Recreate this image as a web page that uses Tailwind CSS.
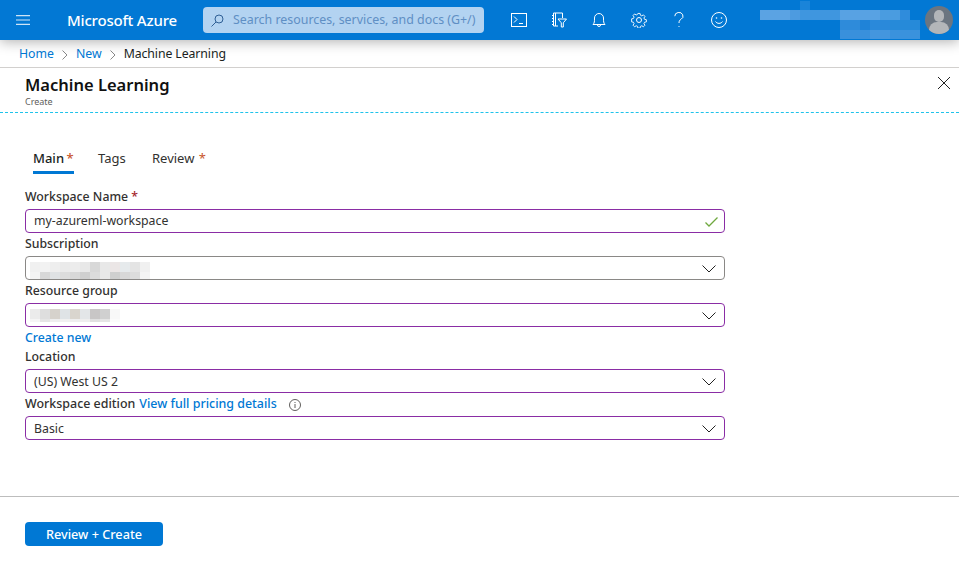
<!DOCTYPE html>
<html lang="en">
<head>
  <meta charset="UTF-8" />
  <title>Machine Learning - Microsoft Azure</title>
  <script src="https://cdn.jsdelivr.net/npm/@tailwindcss/browser@4"></script>
</head>
<body class="bg-white font-['Noto_Sans','Open_Sans',sans-serif] text-[12.3px] text-[#323130] w-[959px] h-[562px] overflow-hidden">
  <!-- Top bar -->
  <header class="relative z-10 h-10 bg-[#0278d4] flex items-center text-white shadow-[0_2px_12px_rgba(0,0,0,0.3)]">
    <svg class="ml-4 w-[14px] h-[10px]" viewBox="0 0 14 10" fill="none" stroke="#cfe4f6" stroke-width="1.2"><path d="M0 .6h14M0 5h14M0 9.4h14"/></svg>
    <span class="ml-[37px] w-[136px] text-[15px] font-medium tracking-[-0.2px]">Microsoft Azure</span>
    <div class="flex items-center w-[281px] h-[26px] rounded-sm bg-[#b3d3f1]">
      <svg class="ml-2 w-[13px] h-[13px]" viewBox="0 0 13 13" fill="none" stroke="#2f5f95" stroke-width="1"><circle cx="8" cy="5" r="4"/><path d="M5 8l-4.500 4.500"/></svg>
      <span class="ml-[9px] text-[12.4px] text-[#5f8fc4] whitespace-nowrap">Search resources, services, and docs (G+/)</span>
    </div>
    <div class="ml-[15px] flex items-center">
      <div class="w-10 flex justify-center">
        <svg class="w-4 h-[14px]" viewBox="0 0 16 14" fill="none" stroke="white" stroke-width="1"><rect x=".5" y=".5" width="15" height="13"/><path d="M3 3.500l3 3-3 3M8 10.500h4"/></svg>
      </div>
      <div class="w-10 flex justify-center">
        <svg class="w-4 h-4" viewBox="0 0 16 16" fill="none" stroke="white" stroke-width="1"><path d="M2.500 1h9v5M7 14H2.500V1M4.500 1v13M1 3.500h2M1 6.500h2M1 9.500h2M1 12.500h2"/><path d="M7 7h8.500l-3.200 3.800V15h-2v-4.200z"/></svg>
      </div>
      <div class="w-10 flex justify-center">
        <svg class="w-[14px] h-4" viewBox="0 0 14 16" fill="none" stroke="white" stroke-width="1"><path d="M1 12.500c1.500-1.500 1.500-3 1.500-6.500a4.500 4.500 0 0 1 9 0c0 3.500 0 5 1.500 6.500zM5.500 13a1.500 1.500 0 0 0 3 0"/></svg>
      </div>
      <div class="w-10 flex justify-center">
        <svg class="w-4 h-4" viewBox="0 0 16 16" fill="none" stroke="white" stroke-width="1"><circle cx="8" cy="8" r="2.500"/><path d="M6.800.7h2.400l.4 2 1.500.7 1.800-1.100 1.700 1.700-1.100 1.800.7 1.500 2 .4v2.400l-2 .4-.7 1.500 1.100 1.800-1.700 1.700-1.800-1.100-1.500.7-.4 2H6.800l-.4-2-1.500-.7-1.800 1.100-1.700-1.700 1.100-1.800-.7-1.500-2-.4V6.700l2-.4.700-1.500-1.100-1.800 1.700-1.700 1.800 1.100 1.500-.7z" transform="translate(.8 .8) scale(.9)"/></svg>
      </div>
      <div class="w-10 flex justify-center">
        <svg class="w-[10px] h-4" viewBox="0 0 10 16" fill="none" stroke="white" stroke-width="1"><path d="M.8 4.200a4.100 3.700 0 1 1 6.200 3.100C5.700 8.200 5 9 5 11"/><circle cx="5" cy="14.500" r=".6" fill="white" stroke="none"/></svg>
      </div>
      <div class="w-10 flex justify-center">
        <svg class="w-4 h-4" viewBox="0 0 16 16" fill="none" stroke="white" stroke-width="1"><circle cx="8" cy="8" r="7.500"/><path d="M4.500 9.500c1.500 2.500 5.500 2.500 7 0"/><circle cx="5.500" cy="6" r=".8" fill="white" stroke="none"/><circle cx="10.500" cy="6" r=".8" fill="white" stroke="none"/></svg>
      </div>
    </div>
    <!-- blurred account name -->
    <div class="ml-[21px] w-[160px] h-10 flex flex-col pt-[1px]">
      <div class="ml-[40px] w-[10px] h-[9px] bg-[#1a84d9]"></div>
      <div class="flex h-[10px] w-[150px]">
        <div class="w-[30px] bg-[#5ba3e3]"></div>
        <div class="w-[10px] bg-[#4d9be0]"></div>
        <div class="w-[40px] bg-[#3f96df]"></div>
        <div class="w-[40px] bg-[#58a2e3]"></div>
        <div class="w-[20px] bg-[#4a9ce0]"></div>
        <div class="w-[10px] bg-[#2f8cdc]"></div>
      </div>
      <div class="ml-[80px] flex h-[10px] w-[80px]">
        <div class="w-[20px] bg-[#2e8bda]"></div>
        <div class="w-[10px] bg-[#1f83d8]"></div>
        <div class="w-[20px] bg-[#2a89da]"></div>
        <div class="w-[30px] bg-[#268ad9]"></div>
      </div>
      <div class="ml-[80px] flex h-[9px] w-[80px]">
        <div class="w-[30px] bg-[#3990dc]"></div>
        <div class="w-[20px] bg-[#4496de]"></div>
        <div class="w-[30px] bg-[#3a92dd]"></div>
      </div>
    </div>
    <!-- avatar -->
    <div class="relative ml-[5px] w-7 h-7 rounded-full bg-[#6b7580] overflow-hidden">
      <div class="absolute left-[9px] top-[4px] w-[10px] h-[12px] rounded-full bg-[#b3b6b9]"></div>
      <div class="absolute left-[4px] top-[16px] w-5 h-3 rounded-t-lg bg-[#b3b6b9]"></div>
    </div>
  </header>

  <!-- Breadcrumb -->
  <nav class="h-7 flex items-center pl-[19px] border-b border-[#d2d0ce] pt-[2px]">
    <a class="text-[#0078d4]">Home</a>
    <svg class="mx-2 w-[6px] h-[10px]" viewBox="0 0 6 10" fill="none" stroke="#7a7a7a" stroke-width=".9"><path d="M.5.500l4.500 4.500-4.500 4.500"/></svg>
    <a class="text-[#0078d4]">New</a>
    <svg class="mx-2 w-[6px] h-[10px]" viewBox="0 0 6 10" fill="none" stroke="#7a7a7a" stroke-width=".9"><path d="M.5.500l4.500 4.500-4.500 4.500"/></svg>
    <span class="text-[#201f1e] tracking-[-0.1px]">Machine Learning</span>
  </nav>

  <!-- Blade title -->
  <div class="relative h-[45px] pl-[25px] pt-[4px] border-b border-dashed border-[#1fc3ea]">
    <h1 class="text-[16.5px] leading-[25px] font-semibold text-[#111]">Machine Learning</h1>
    <p class="text-[9px] leading-[10px] text-[#605e5c]">Create</p>
    <svg class="absolute right-[9px] top-[9px] w-3 h-3" viewBox="0 0 12 12" fill="none" stroke="#222" stroke-width="1"><path d="M0 0l12 12M12 0L0 12"/></svg>
  </div>

  <main class="pl-[25px] w-[725px]">
    <!-- Tabs -->
    <div class="mt-[32px] flex h-[29px] pl-2 text-[13px] leading-[26px]">
      <div class="w-[41px] border-b-[3px] border-[#0078d4] font-medium text-[#201f1e] whitespace-nowrap">Main <span class="-ml-[1px] text-[#c8552b]">*</span></div>
      <div class="ml-6 w-[54px]">Tags</div>
      <div class="whitespace-nowrap">Review <span class="ml-[1px] text-[#c8552b]">*</span></div>
    </div>

    <!-- Form -->
    <form class="mt-[13px]">
      <label class="block h-[22px] leading-[20px] font-medium">Workspace Name <span class="text-[#a4262c]">*</span></label>
      <div class="h-6 flex items-center justify-between pl-2 pr-[6px] pt-[1px] border border-[#8a2da5] rounded-sm">
        <span>my-azureml-workspace</span>
        <svg class="w-[13px] h-[10px]" viewBox="0 0 13 10" fill="none" stroke="#6fa83f" stroke-width="1.300"><path d="M.5 5.500l3.500 3.500 8.500-8.500"/></svg>
      </div>

      <label class="block h-[23px] leading-[22px] font-medium">Subscription</label>
      <div class="h-6 flex items-center justify-between pl-1 pr-2 border border-[#8a8886] rounded-sm">
        <div class="w-[120px] mt-[4px]">
          <div class="flex h-[10px] [&>div]:flex-1">
            <div class="bg-[#f0f0f0]"></div><div class="bg-[#f2f2f2]"></div><div class="bg-[#eeeeee]"></div><div class="bg-[#eaeaea]"></div><div class="bg-[#ececec]"></div><div class="bg-[#e8e8e8]"></div><div class="bg-[#d8d8d8]"></div><div class="bg-[#e8e8e8]"></div><div class="bg-[#ebe6e6]"></div><div class="bg-[#e6eaec]"></div><div class="bg-[#e4e4e4]"></div><div class="bg-[#f0f0f0]"></div>
          </div>
          <div class="flex h-[7px] [&>div]:flex-1">
            <div class="bg-[#f3f3f3]"></div><div class="bg-[#d8d8d8]"></div><div class="bg-[#dfe2e4]"></div><div class="bg-[#dcdcdc]"></div><div class="bg-[#d8d8d8]"></div><div class="bg-[#cfcfcf]"></div><div class="bg-[#dcdcdc]"></div><div class="bg-[#e8e8e8]"></div><div class="bg-[#cfcfcf]"></div><div class="bg-[#d8d8d8]"></div><div class="bg-[#dcdcdc]"></div><div class="bg-[#f4f4f4]"></div>
          </div>
        </div>
        <svg class="mt-[1px] w-[14px] h-2" viewBox="0 0 14 8" fill="none" stroke="#222" stroke-width="1"><path d="M.5.500L7 7 13.500.500"/></svg>
      </div>

      <label class="block h-[23px] leading-[22px] font-medium">Resource group</label>
      <div class="h-6 flex items-center justify-between pl-1 pr-2 border border-[#8a2da5] rounded-sm">
        <div class="w-[90px] mt-[1px]">
          <div class="flex h-[10px] [&>div]:flex-1">
            <div class="bg-[#ebebeb]"></div><div class="bg-[#dedede]"></div><div class="bg-[#d6d2cc]"></div><div class="bg-[#dfe3e6]"></div><div class="bg-[#d9d5ce]"></div><div class="bg-[#e3e6e8]"></div><div class="bg-[#c8c6c6]"></div><div class="bg-[#d0d0d0]"></div><div class="bg-[#f8f8f8]"></div>
          </div>
          <div class="flex h-[3px] [&>div]:flex-1">
            <div class="bg-[#f5f5f5]"></div><div class="bg-[#e5e5e5]"></div><div class="bg-[#eeeeee]"></div><div class="bg-[#f0f0f0]"></div><div class="bg-[#eeeeee]"></div><div class="bg-[#eeeeee]"></div><div class="bg-[#e0e0e0]"></div><div class="bg-[#e5e5e5]"></div><div class="bg-[#fbfbfb]"></div>
          </div>
        </div>
        <svg class="mt-[1px] w-[14px] h-2" viewBox="0 0 14 8" fill="none" stroke="#222" stroke-width="1"><path d="M.5.500L7 7 13.500.500"/></svg>
      </div>

      <a class="block h-[19px] pt-[1px] leading-[20px] font-medium text-[#0078d4]">Create new</a>
      <label class="block h-[23px] leading-[22px] font-medium">Location</label>
      <div class="h-6 flex items-center justify-between pl-2 pr-2 border border-[#8a2da5] rounded-sm">
        <span class="pt-[3px]">(US) West US 2</span>
        <svg class="mt-[1px] w-[14px] h-2" viewBox="0 0 14 8" fill="none" stroke="#222" stroke-width="1"><path d="M.5.500L7 7 13.500.500"/></svg>
      </div>

      <div class="h-[23px] flex items-center font-medium text-[12.450px]">
        <span>Workspace edition</span>
        <a class="ml-1 text-[#0078d4]">View full pricing details</a>
        <svg class="ml-[12px] w-3 h-3" viewBox="0 0 12 12" fill="none" stroke="#605e5c" stroke-width="1"><circle cx="6" cy="6" r="5.500"/><path d="M6 5v4M6 3v1"/></svg>
      </div>
      <div class="h-6 flex items-center justify-between pl-2 pr-2 border border-[#8a2da5] rounded-sm">
        <span class="pt-[3px]">Basic</span>
        <svg class="mt-[1px] w-[14px] h-2" viewBox="0 0 14 8" fill="none" stroke="#222" stroke-width="1"><path d="M.5.500L7 7 13.500.500"/></svg>
      </div>
    </form>
  </main>

  <!-- Footer -->
  <div class="mt-[56px] border-t border-[#bdbdbd] pl-[25px] pt-[25px]">
    <button class="w-[138px] h-6 pt-[2px] rounded-sm bg-[#0078d4] text-white text-[12.700px] font-medium">Review + Create</button>
  </div>
</body>
</html>
